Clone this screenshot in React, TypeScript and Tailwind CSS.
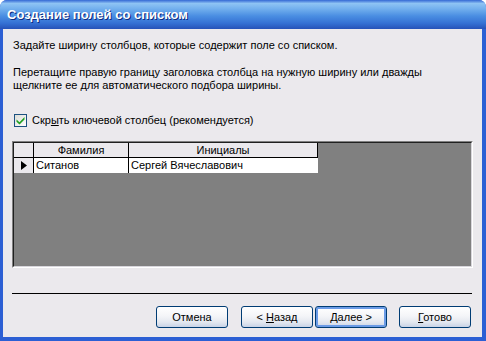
import React from 'react';

const FONT = "font-['Tahoma','Liberation_Sans',sans-serif]";

const XpButton: React.FC<{ children: React.ReactNode; isDefault?: boolean }> = ({ children, isDefault }) => (
    <button
        type="button"
        className={`w-[72px] h-[22px] rounded-[3px] border border-[#003c74] bg-[linear-gradient(to_bottom,#ffffff_0%,#f4f5f8_45%,#e4e8f0_75%,#c9d3e6_100%)] text-[11px] text-black leading-none flex items-center justify-center ${
            isDefault ? 'shadow-[inset_0_0_0_2px_#6b9be6]' : ''
        }`}
    >
        <span className="whitespace-pre">{children}</span>
    </button>
);

export default function App() {
    return (
        <div className={`w-[486px] h-[341px] flex flex-col bg-[#2c5fd4] rounded-t-[7px] overflow-hidden ${FONT}`}>
            {/* Title bar */}
            <div className="h-[29px] shrink-0 flex items-center pl-[7px] bg-[linear-gradient(to_bottom,#3468d4_0%,#8ec3f4_12%,#73b0ee_30%,#4a8ee2_55%,#3571d4_80%,#2652b8_100%)]">
                <span className="text-white font-bold text-[13px] [text-shadow:1px_1px_#0d2a80]">
                    Создание полей со списком
                </span>
            </div>

            {/* Body */}
            <div className="flex-1 ml-[3px] mr-[4px] mb-[4px] bg-[#ebe9ed] flex flex-col px-[9px] pt-[10px] text-[11px] leading-[13px] text-black">
                <p className="pl-px">Задайте ширину столбцов, которые содержит поле со списком.</p>
                <p className="mt-[14px] pl-px">
                    Перетащите правую границу заголовка столбца на нужную ширину или дважды
                    <br />
                    щелкните ее для автоматического подбора ширины.
                </p>

                <label className="mt-[22px] ml-[2px] flex items-center gap-[5px] h-[13px]">
                    <span className="w-[13px] h-[13px] border border-[#1c5180] bg-[linear-gradient(135deg,#dcdcd7_0%,#ffffff_100%)] flex items-center justify-center">
                        <svg width="9" height="9" viewBox="0 0 9 9" aria-hidden="true">
                            <path d="M0.5 3.5 L3.5 6.2 L8.5 1 L8.5 3.5 L3.5 8.5 L0.5 5.8 Z" fill="#21a121" />
                        </svg>
                    </span>
                    <span>
                        Скр<span className="underline">ы</span>ть ключевой столбец (рекомендуется)
                    </span>
                </label>

                {/* Grid */}
                <div className="mt-[14px] h-[127px] border border-t-[#808080] border-l-[#808080] border-b-white border-r-white">
                    <div className="h-full border border-t-[#202020] border-l-[#202020] border-b-[#d8d6dc] border-r-[#d8d6dc] bg-[#808080]">
                        <div className="grid grid-cols-[20px_95px_189px] w-max">
                            <div className="h-[15px] bg-[#ebe9ed] border-r border-b border-black" />
                            <div className="h-[15px] bg-[#ebe9ed] border-r border-b border-black text-center leading-[14px]">Фамилия</div>
                            <div className="h-[15px] bg-[#ebe9ed] border-r border-b border-black text-center leading-[14px]">Инициалы</div>
                            <div className="h-[15px] bg-[#ebe9ed] border-r border-black flex items-center justify-center">
                                <svg width="6" height="9" viewBox="0 0 6 9" aria-hidden="true">
                                    <path d="M0 0 L6 4.5 L0 9 Z" fill="#000" />
                                </svg>
                            </div>
                            <div className="h-[15px] bg-white border-r border-black pl-[2px] leading-[15px]">Ситанов</div>
                            <div className="h-[15px] bg-white pl-[2px] leading-[15px]">Сергей Вячеславович</div>
                        </div>
                    </div>
                </div>

                <div className="mt-[25px] h-px bg-black mr-px" />

                <div className="mt-[12px] flex justify-end pr-[2px]">
                    <XpButton>Отмена</XpButton>
                    <div className="ml-[13px] flex gap-[2px]">
                        <XpButton>
                            {'< '}<span className="underline">Н</span>азад
                        </XpButton>
                        <XpButton isDefault>
                            <span className="underline">Д</span>{'алее >'}
                        </XpButton>
                    </div>
                    <div className="ml-[12px]">
                        <XpButton>
                            <span className="underline">Г</span>отово
                        </XpButton>
                    </div>
                </div>
            </div>
        </div>
    );
}
